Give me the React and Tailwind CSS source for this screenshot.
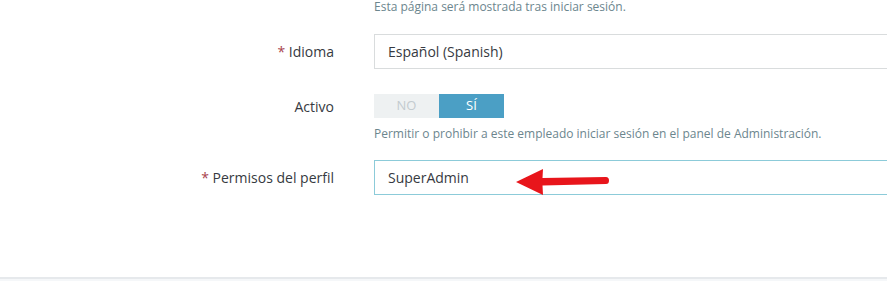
import React from "react";

function Label({ children, required }) {
  return (
    <label className="w-[334px] shrink-0 text-right text-[14px] text-[#363a41]">
      {required && <span className="text-[#a8434d]">* </span>}
      {children}
    </label>
  );
}

function Arrow() {
  return (
    <svg
      className="absolute left-[139px] top-[6px]"
      width="96"
      height="30"
      viewBox="0 0 96 30"
    >
      <path
        d="M2 15 L29 2 L28.5 11 L92 10 Q95 10 95 13.5 Q95 17 92 17 L28.5 18.5 L29 28 Z"
        fill="#e8151b"
      />
    </svg>
  );
}

export default function App() {
  return (
    <div className="w-full h-[281px] overflow-hidden bg-white font-['Open_Sans',sans-serif] flex flex-col">
      <div className="flex-1 pt-[1px]">
        {/* help text of the previous field */}
        <div className="flex">
          <div className="w-[334px] shrink-0" />
          <p className="ml-[40px] text-[12px] leading-[12px] text-[#6c868e]">
            Esta página será mostrada tras iniciar sesión.
          </p>
        </div>

        {/* Idioma */}
        <div className="flex items-center mt-[21px]">
          <Label required>Idioma</Label>
          <div className="ml-[40px] w-[600px] shrink-0 h-[35px] border border-[#d9dcdd] flex items-center px-[13px] text-[14px] text-[#363a41]">
            Español (Spanish)
          </div>
        </div>

        {/* Activo */}
        <div className="flex mt-[25px]">
          <div className="w-[334px] shrink-0 h-[24px] flex items-center justify-end text-[14px] text-[#363a41]">
            Activo
          </div>
          <div className="ml-[40px]">
            <div className="flex h-[24px] text-[13px]">
              <span className="w-[65px] flex items-center justify-center bg-[#eef1f2] text-[#c3cbcf]">
                NO
              </span>
              <span className="w-[65px] flex items-center justify-center bg-[#4b9fc5] text-white">
                SÍ
              </span>
            </div>
            <p className="mt-[9px] text-[12px] leading-[14px] text-[#6c868e] whitespace-nowrap">
              Permitir o prohibir a este empleado iniciar sesión en el panel de Administración.
            </p>
          </div>
        </div>

        {/* Permisos del perfil */}
        <div className="flex items-center mt-[19px]">
          <Label required>Permisos del perfil</Label>
          <div className="relative ml-[40px] w-[600px] shrink-0 h-[35px] border border-[#8ccbd9] flex items-center px-[13px] text-[14px] text-[#363a41]">
            SuperAdmin
            <Arrow />
          </div>
        </div>
      </div>

      <div className="h-[4px] border-t-2 border-[#e6e9ec] bg-[#f5f7f9]" />
    </div>
  );
}
